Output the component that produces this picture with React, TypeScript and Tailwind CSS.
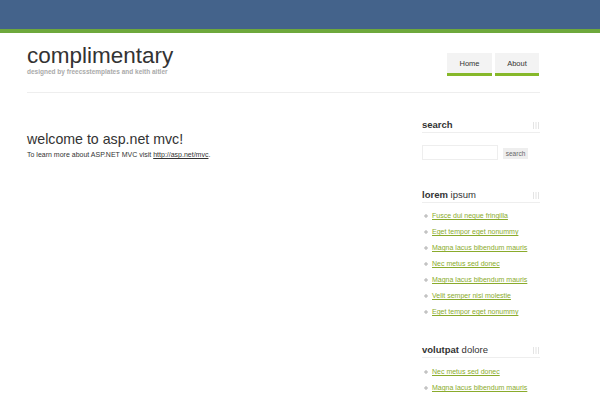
import React from 'react';

const lorem = [
  'Fusce dui neque fringilla',
  'Eget tempor eget nonummy',
  'Magna lacus bibendum mauris',
  'Nec metus sed donec',
  'Magna lacus bibendum mauris',
  'Velit semper nisi molestie',
  'Eget tempor eget nonummy',
];

const volutpat = ['Nec metus sed donec', 'Magna lacus bibendum mauris'];

function Grip() {
  return (
    <svg width="6" height="7" viewBox="0 0 6 7" className="mr-[1px]">
      <rect x="0" y="0" width="1" height="7" fill="#e4e4e4" />
      <rect x="2.5" y="0" width="1" height="7" fill="#e4e4e4" />
      <rect x="5" y="0" width="1" height="7" fill="#e4e4e4" />
    </svg>
  );
}

function SideHeading({ bold, rest }: { bold: string; rest?: string }) {
  return (
    <h2 className="flex items-center justify-between border-b border-[#eeeeee] pb-[1px] text-[9.5px] leading-[12px] text-[#333]">
      <span>
        <span className="font-bold">{bold}</span>
        {rest && <span> {rest}</span>}
      </span>
      <Grip />
    </h2>
  );
}

function LinkList({ items }: { items: string[] }) {
  return (
    <ul>
      {items.map((item, i) => (
        <li key={i} className="flex h-[16px] items-center pl-[2px] text-[7px] leading-[16px]">
          <svg width="4" height="4" viewBox="0 0 4 4" className="mr-[4px] shrink-0">
            <rect x="1.5" y="0" width="1" height="4" fill="#b0b0b0" />
            <rect x="0" y="1.5" width="4" height="1" fill="#b0b0b0" />
          </svg>
          <a href="#" className="text-[#8aab2c] underline">
            {item}
          </a>
        </li>
      ))}
    </ul>
  );
}

export default function App() {
  return (
    <div className="min-h-[400px] bg-white font-['Liberation_Sans',Arial,sans-serif]">
      <div className="h-[29px] bg-[#44638b]" />
      <div className="h-[4px] bg-[#6ea83c]" />

      <div className="ml-[27px] w-[513px]">
        <header className="flex h-[60px] justify-between border-b border-[#eeeeee]">
          <div className="pt-[12px]">
            <h1 className="text-[22.5px] leading-[22px] text-[#333]">complimentary</h1>
            <p className="mt-[1px] text-[6.5px] font-bold leading-[7px] text-[#aaaaaa]">
              designed by freecsstemplates and keith aitler
            </p>
          </div>
          <nav className="mr-[1px] flex gap-[3px] pt-[20px]">
            {[
              { label: 'Home', w: 'w-[45px]' },
              { label: 'About', w: 'w-[44px]' },
            ].map((tab) => (
              <a
                key={tab.label}
                href="#"
                className={`${tab.w} flex h-[23px] items-center justify-center border-b-[3px] border-[#86b82a] bg-[#f3f3f3] pt-[2px] text-[7.5px] text-[#333]`}
              >
                {tab.label}
              </a>
            ))}
          </nav>
        </header>

        <div className="flex">
          <main className="w-[395px] pt-[38px]">
            <h2 className="text-[14.2px] leading-[16px] text-[#333]">welcome to asp.net mvc!</h2>
            <p className="mt-[3px] text-[7px] leading-[9px] text-[#333]">
              To learn more about ASP.NET MVC visit{' '}
              <a href="#" className="underline">
                http://asp.net/mvc
              </a>
              .
            </p>
          </main>

          <aside className="w-[118px] pt-[26px]">
            <SideHeading bold="search" />
            <div className="mt-[12px] flex items-center">
              <input className="h-[15px] w-[76px] border border-[#eeeeee] outline-none" />
              <button className="ml-[5px] mt-[2px] h-[11px] w-[25px] bg-[#eeeeee] text-[6.5px] leading-[11px] text-[#666]">
                search
              </button>
            </div>

            <div className="mt-[29px]">
              <SideHeading bold="lorem" rest="ipsum" />
            </div>
            <div className="mt-[5px]">
              <LinkList items={lorem} />
            </div>

            <div className="mt-[24px]">
              <SideHeading bold="volutpat" rest="dolore" />
            </div>
            <div className="mt-[6px]">
              <LinkList items={volutpat} />
            </div>
          </aside>
        </div>
      </div>
    </div>
  );
}
